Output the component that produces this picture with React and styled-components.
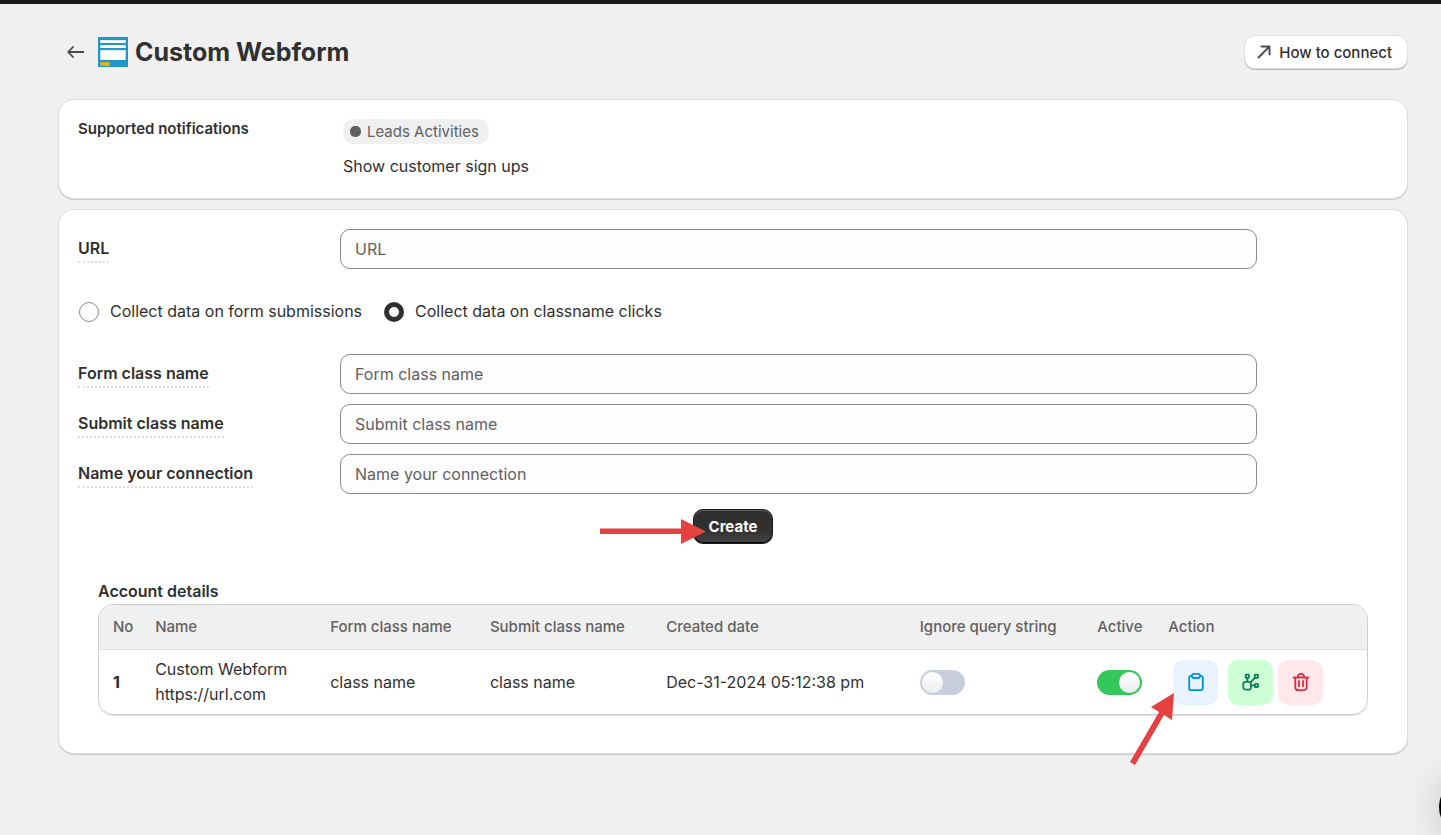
import React from "react";
import styled, { createGlobalStyle, css } from "styled-components";

const fields = [
	{ id: "formClass", label: "Form class name" },
	{ id: "submitClass", label: "Submit class name" },
	{ id: "connection", label: "Name your connection" },
];

const columns = [
	{ title: "No", width: "3.8%" },
	{ title: "Name", width: "13.8%" },
	{ title: "Form class name", width: "12.6%" },
	{ title: "Submit class name", width: "13.9%" },
	{ title: "Created date", width: "20%" },
	{ title: "Ignore query string", width: "14%" },
	{ title: "Active", width: "5.6%" },
	{ title: "Action", width: "16.3%" },
];

const accounts = [
	{
		name: "Custom Webform",
		url: "https://url.com",
		formClass: "class name",
		submitClass: "class name",
		created: "Dec-31-2024 05:12:38 pm",
		ignoreQuery: false,
		active: true,
	},
];

const BackIcon = () => (
	<svg width="18" height="14" viewBox="0 0 18 14" fill="none" stroke="#4a4a4a" strokeWidth="1.8" strokeLinecap="round" strokeLinejoin="round">
		<path d="M16.3 7H1.5M6 2 1.2 7 6 12" />
	</svg>
);

const FormIcon = () => (
	<svg width="30" height="30" viewBox="0 0 30 30">
		<rect width="30" height="30" fill="#2196cd" />
		<path d="M2 3H28V6H2ZM2 8H28V11H2ZM2 13H28V23H2Z" fill="#b5dcef" />
		<path d="M3 3.5H27V6H3ZM3 8H27V11H3ZM3 13.500H27V23H3Z" fill="#fff" />
		<rect x="2" y="25" width="10" height="4" fill="#b5a544" />
		<rect x="3" y="25.5" width="8" height="3" fill="#f9ae00" />
	</svg>
);

const ExternalIcon = () => (
	<svg width="14" height="14" viewBox="0 0 14 14" fill="none" stroke="#4a4a4a" strokeWidth="1.9" strokeLinecap="round" strokeLinejoin="round">
		<path d="M1.5 12.5 12.3 1.7M4.5 1.5h8v8" />
	</svg>
);

const ClipboardIcon = () => (
	<svg width="18" height="20" viewBox="0 0 18 20" fill="none" stroke="#0094d5" strokeWidth="1.8" strokeLinejoin="round">
		<path d="M5 3.8H4A1.8 1.8 0 0 0 2.2 5.6V16.4A1.8 1.8 0 0 0 4 18.2H14A1.8 1.8 0 0 0 15.8 16.4V5.6A1.8 1.8 0 0 0 14 3.8H13" />
		<rect x="5" y="1.8" width="8" height="4.2" rx="1.7" />
	</svg>
);

const NodesIcon = () => (
	<svg width="18" height="18" viewBox="0 0 18 18" fill="none" stroke="#0c7c59" strokeWidth="1.8" strokeLinejoin="round">
		<rect x="1.3" y="8.800" width="7.600" height="7.800" rx="2.200" />
		<rect x="3.700" y="1.600" width="3.200" height="3.200" rx="0.6" />
		<rect x="12.800" y="1.600" width="3.200" height="3.200" rx="0.6" />
		<rect x="12.800" y="10.800" width="3.200" height="3.200" rx="0.6" />
		<path d="M5.300 5V9M13.200 4.600 8.400 9.400M9 12.400H12.800" />
	</svg>
);

const TrashIcon = () => (
	<svg width="18" height="20" viewBox="0 0 18 20" fill="none" stroke="#e02d3c" strokeWidth="1.8" strokeLinecap="round" strokeLinejoin="round">
		<path d="M1.5 5.5H16.5M3.3 5.5V15.2A3 3 0 0 0 6.3 18.2H11.7A3 3 0 0 0 14.7 15.2V5.5M6 5.5V4.3A2.5 2.5 0 0 1 8.5 1.8H9.5A2.5 2.5 0 0 1 12 4.3V5.5M7 9V14.2M11 9V14.2" />
	</svg>
);

const App = () => {
	const [mode, setMode] = React.useState("click");
	const [rows, setRows] = React.useState(accounts);

	const toggle = (idx, key) => {
		setRows(rows.map((r, i) => (i === idx ? { ...r, [key]: !r[key] } : r)));
	};

	return (
		<Page>
			<GlobalStyle />
			<TopBar />
			<Main>
				<Header>
					<BackLink href="#" aria-label="Back">
						<BackIcon />
					</BackLink>
					<FormIcon />
					<Title>Custom Webform</Title>
					<HelpButton type="button">
						<ExternalIcon />
						How to connect
					</HelpButton>
				</Header>

				<Card>
					<Support>
						<SupportTitle>Supported notifications</SupportTitle>
						<div>
							<Badge>Leads Activities</Badge>
							<SupportText>Show customer sign ups</SupportText>
						</div>
					</Support>
				</Card>

				<Card>
					<Form onSubmit={(e) => e.preventDefault()}>
						<Field>
							<Label htmlFor="url">URL</Label>
							<Input id="url" placeholder="URL" />
						</Field>

						<Radios>
							<RadioLabel>
								<Radio name="mode" checked={mode === "submit"} onChange={() => setMode("submit")} />
								Collect data on form submissions
							</RadioLabel>
							<RadioLabel>
								<Radio name="mode" checked={mode === "click"} onChange={() => setMode("click")} />
								Collect data on classname clicks
							</RadioLabel>
						</Radios>

						{fields.map((f) => (
							<Field key={f.id}>
								<Label htmlFor={f.id}>{f.label}</Label>
								<Input id={f.id} placeholder={f.label} />
							</Field>
						))}

						<Submit>
							<CreateButton type="submit">Create</CreateButton>
							<CreatePointer width="108" height="28" viewBox="0 0 108 28" fill="#e54141">
								<path d="M0 11.5H81V2L106 14.500 81 27V17H0Z" />
							</CreatePointer>
						</Submit>
					</Form>

					<Details>
						<DetailsTitle>Account details</DetailsTitle>
						<TableBox>
							<Table>
								<colgroup>
									{columns.map((c) => (
										<Col key={c.title} $width={c.width} />
									))}
								</colgroup>
								<thead>
									<tr>
										{columns.map((c) => (
											<Th key={c.title}>{c.title}</Th>
										))}
									</tr>
								</thead>
								<tbody>
									{rows.map((r, idx) => (
										<tr key={idx}>
											<Td $strong>{idx + 1}</Td>
											<Td>
												{r.name}
												<br />
												{r.url}
											</Td>
											<Td>{r.formClass}</Td>
											<Td>{r.submitClass}</Td>
											<Td>{r.created}</Td>
											<Td>
												<Switch aria-label="Ignore query string" checked={r.ignoreQuery} onChange={() => toggle(idx, "ignoreQuery")} />
											</Td>
											<Td>
												<Switch aria-label="Active" checked={r.active} onChange={() => toggle(idx, "active")} />
											</Td>
											<Td>
												<Actions>
													<ActionButton $bg="#e8f3ff" aria-label="Copy">
														<ClipboardIcon />
													</ActionButton>
													<ActionGroup>
														<ActionButton $bg="#cdfed4" aria-label="Connections">
															<NodesIcon />
														</ActionButton>
														<ActionButton $bg="#fee8eb" aria-label="Delete">
															<TrashIcon />
														</ActionButton>
													</ActionGroup>
													<CopyPointer width="46" height="74" viewBox="0 0 46 74" fill="#e54141">
														<path d="M44 1 42 28 34 23 5 73 0 70 29 20 21 15Z" />
													</CopyPointer>
												</Actions>
											</Td>
										</tr>
									))}
								</tbody>
							</Table>
						</TableBox>
					</Details>
				</Card>
			</Main>
			<ChatButton type="button" aria-label="Chat" />
		</Page>
	);
};

const GlobalStyle = createGlobalStyle`
	* {
		box-sizing: border-box;
	}
	body {
		margin: 0;
		background: #f0f0f0;
		color: #303030;
		font: 400 16px/25px Inter, "Liberation Sans", sans-serif;
	}
	button, input {
		font: inherit;
		color: inherit;
	}
`;

const Page = styled.div`
	min-height: 100vh;
`;

const TopBar = styled.div`
	height: 4px;
	background: #1a1a1a;
`;

const Main = styled.main`
	display: flex;
	flex-direction: column;
	gap: 12px;
	padding: 31px 34px 40px 59px;
`;

const Header = styled.header`
	display: flex;
	align-items: center;
	height: 34px;
	margin-bottom: 19px;
	padding-left: 8px;
`;

const BackLink = styled.a`
	display: flex;
	margin-right: 13px;
`;

const Title = styled.h1`
	margin: 0 auto 0 7px;
	font-size: 25px;
	line-height: 30px;
	font-weight: 650;
`;

const HelpButton = styled.button`
	display: flex;
	align-items: center;
	gap: 8px;
	height: 32px;
	padding: 0 15px 0 12px;
	border: 0;
	border-radius: 10px;
	background: #fff;
	box-shadow: 0 0 0 1px #e2e2e2, 0 1px 0 1px #b5b5b5;
	font-size: 15px;
	font-weight: 500;
`;

const Card = styled.section`
	padding: 19px;
	border-radius: 15px;
	background: #fff;
	box-shadow: 0 0 0 1px #dedede, 0 1px 1px 1px #c8c8c8;
`;

const grid = css`
	display: grid;
	grid-template-columns: 20% 70%;
`;

const Support = styled.div`
	${grid}
	min-height: 60px;
`;

const SupportTitle = styled.h2`
	margin: 0;
	font-size: 15px;
	line-height: 20px;
	font-weight: 600;
`;

const Badge = styled.span`
	display: inline-flex;
	align-items: center;
	gap: 6px;
	height: 25px;
	margin-left: 3px;
	padding: 0 10px 0 7px;
	border-radius: 10px;
	background: #f0f0f0;
	color: #616161;
	font-size: 15px;

	&::before {
		content: "";
		width: 11px;
		height: 11px;
		border-radius: 5px;
		background: #616161;
	}
`;

const SupportText = styled.p`
	margin: 10px 0 0 3px;
`;

const Form = styled.form`
	display: flex;
	flex-direction: column;
	gap: 10px;
`;

const Field = styled.div`
	${grid}
	align-items: center;
`;

const Label = styled.label`
	justify-self: start;
	border-bottom: 2px dotted #dedede;
	font-weight: 600;
`;

const Input = styled.input.attrs({ type: "text" })`
	width: 100%;
	height: 40px;
	padding: 0 14px;
	border: 1px solid #8a8a8a;
	border-radius: 10px;
	background: #fdfdfd;

	&::placeholder {
		color: #616161;
		opacity: 1;
	}
`;

const Radios = styled.div`
	display: flex;
	gap: 22px;
	padding: 20px 1px;
`;

const RadioLabel = styled.label`
	display: flex;
	align-items: center;
	gap: 11px;
`;

const Radio = styled.input.attrs({ type: "radio" })`
	appearance: none;
	width: 20px;
	height: 20px;
	margin: 0;
	border: 1px solid #8a8a8a;
	border-radius: 50%;
	background: #fff;

	&:checked {
		border: 5px solid #303030;
	}
`;

const Submit = styled.div`
	position: relative;
	align-self: center;
	margin-top: 5px;
`;

const CreateButton = styled.button`
	display: block;
	width: 80px;
	height: 35px;
	padding: 0;
	border: 1px solid #1a1a1a;
	border-radius: 10px;
	background: linear-gradient(#303030 60%, #454545);
	box-shadow: inset 0 1px 0 #606060, inset 0 -1px 0 #0a0a0a;
	color: #fff;
	font-size: 15px;
	font-weight: 700;
`;

const CreatePointer = styled.svg`
	position: absolute;
	right: 65px;
	top: 8px;
	pointer-events: none;
`;

const Details = styled.div`
	padding: 35px 20px 19px;
`;

const DetailsTitle = styled.h2`
	margin: 0;
	font-size: 16px;
	font-weight: 600;
`;

const TableBox = styled.div`
	border: 1px solid #cfcfcf;
	border-radius: 15px;
	box-shadow: 0 1px 0 #e0e0e0;
`;

const Table = styled.table`
	width: 100%;
	table-layout: fixed;
	border-collapse: separate;
	border-spacing: 0;
`;

const Col = styled.col`
	width: ${(props) => props.$width};
`;

const Th = styled.th`
	height: 45px;
	padding: 0 0 2px 8px;
	border-bottom: 1px solid #dedede;
	background: #f0f0f0;
	color: #616161;
	font-size: 15px;
	font-weight: 500;
	text-align: left;
	white-space: nowrap;

	&:first-child {
		padding-left: 14px;
		border-top-left-radius: 14px;
	}
	&:last-child {
		border-top-right-radius: 14px;
	}
`;

const Td = styled.td`
	height: 64px;
	padding: 0 0 0 8px;
	white-space: nowrap;
	${(props) =>
		props.$strong &&
		css`
			color: #1f2a44;
			font-weight: 700;
		`}

	&:first-child {
		padding-left: 14px;
	}
`;

const Switch = styled.input.attrs({ type: "checkbox", role: "switch" })`
	appearance: none;
	display: flex;
	align-items: center;
	width: 45px;
	height: 25px;
	margin: 0;
	padding: 0 2px;
	border-radius: 13px;
	background: #c9cedc;

	&::before {
		content: "";
		width: 21px;
		height: 21px;
		border-radius: 50%;
		background: linear-gradient(#fff, #ededed);
	}
	&:checked {
		justify-content: flex-end;
		background: #34c759;
	}
`;

const Actions = styled.div`
	position: relative;
	display: flex;
	gap: 10px;
	padding-left: 5px;
`;

const ActionGroup = styled.div`
	display: flex;
	gap: 5px;
`;

const ActionButton = styled.button.attrs({ type: "button" })`
	display: flex;
	align-items: center;
	justify-content: center;
	width: 45px;
	height: 45px;
	padding: 0;
	border: 0;
	border-radius: 10px;
	background: ${(props) => props.$bg};
`;

const CopyPointer = styled.svg`
	position: absolute;
	left: -38px;
	top: 32px;
	pointer-events: none;
`;

const ChatButton = styled.button`
	position: fixed;
	right: -58px;
	bottom: -2px;
	width: 60px;
	height: 60px;
	border: 0;
	border-radius: 50%;
	background: #000;
	box-shadow: 0 2px 40px rgba(0, 0, 0, 0.2);
`;

export default App;
